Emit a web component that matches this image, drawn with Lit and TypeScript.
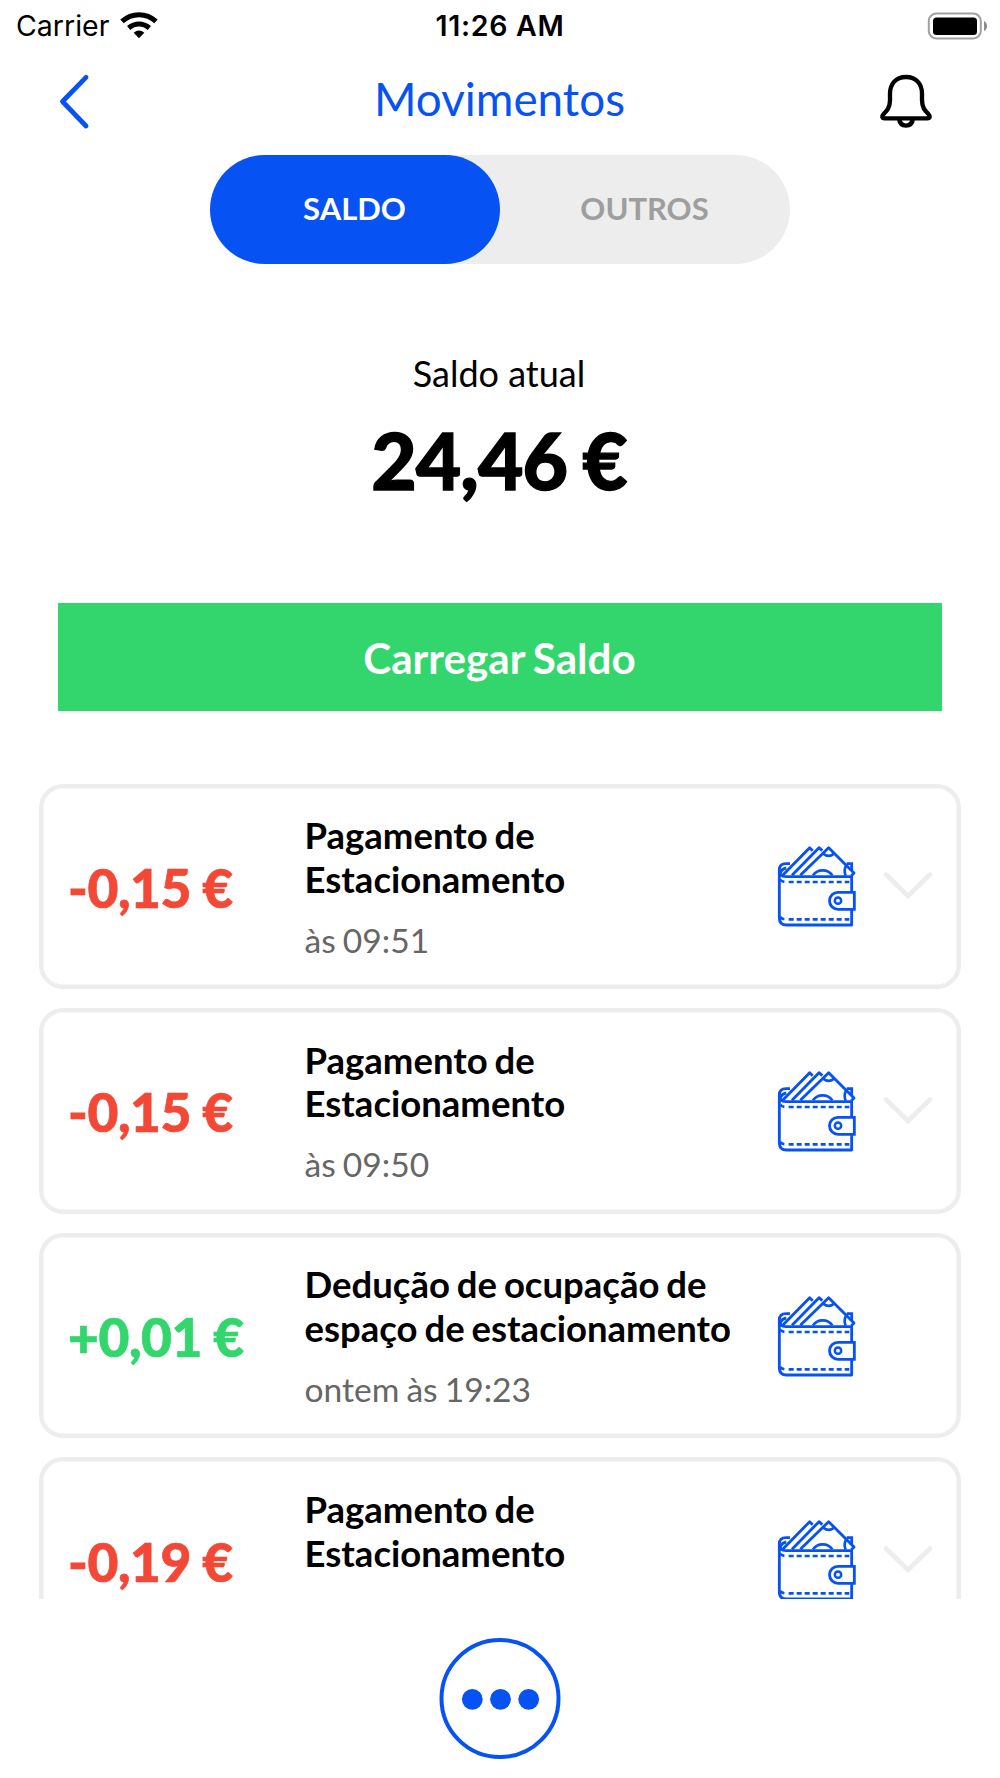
import { LitElement, html, css, svg, nothing } from "lit";
import { customElement, property, state } from "lit/decorators.js";

interface Movement {
  amount: string;
  credit: boolean;
  title: string[];
  when: string;
  expandable: boolean;
}

const MOVEMENTS: Movement[] = [
  { amount: "-0,15 €", credit: false, title: ["Pagamento de", "Estacionamento"], when: "às 09:51", expandable: true },
  { amount: "-0,15 €", credit: false, title: ["Pagamento de", "Estacionamento"], when: "às 09:50", expandable: true },
  { amount: "+0,01 €", credit: true, title: ["Dedução de ocupação de", "espaço de estacionamento"], when: "ontem às 19:23", expandable: false },
  { amount: "-0,19 €", credit: false, title: ["Pagamento de", "Estacionamento"], when: "", expandable: true },
];

const walletShapes = svg`
  <g fill="none" stroke="#0652f3" stroke-width="8.5" stroke-linejoin="round">
    <path d="M46 118V264Q46 285 68 285H263V240M263 186V140H66Q46 140 46 120Q46 101 66 101H78" />
    <path d="M49 129Q54 116 67 114" />
    <path d="M56 136L137 53L146 62M84 136L165 53L175 62M109 136L194 53L270 129L262 137" />
    <path d="M178 71Q194 84 210 71" stroke-width="8" />
    <path d="M147 136Q157 121 176 121Q195 121 205 136" stroke-width="8" />
    <path d="M247 106Q238 120 245 137" stroke-width="8" />
    <path d="M248 101H263V122" stroke-linejoin="miter" />
    <path d="M271 187H222A25.500 25.500 0 0 0 222 238H271Z" stroke-linejoin="miter" />
    <circle cx="222" cy="212" r="9.500" stroke-width="7.500" />
    <path d="M48 149Q55 156 65 156M74 156H256" stroke-dasharray="15 9" stroke-width="8" />
    <path d="M48 261Q55 268 65 268M74 268H256" stroke-dasharray="15 9" stroke-width="8" />
  </g>`;

@customElement("movement-card")
export class MovementCard extends LitElement {
  @property({ attribute: false }) movement!: Movement;

  static styles = css`
    :host { display: block; flex: none; }
    .card {
      box-sizing: border-box;
      height: 205.300px;
      border: 4px solid #ededed;
      box-shadow: inset 0 0 0 0.500px #ededed;
      border-radius: 24px;
      display: grid;
      grid-template-columns: 236.500px 459.500px 117.500px 1fr;
      align-items: center;
      padding-left: 25px;
      font-family: Lato, sans-serif;
    }
    .amount {
      padding-top: 1px;
      font-size: 53.300px;
      font-weight: 900;
      line-height: 64px;
      letter-spacing: -0.450px;
      word-spacing: -1px;
      color: #f44837;
      -webkit-text-stroke: 0.700px currentColor;
      white-space: nowrap;
    }
    .credit { color: #32d66c; }
    .details { align-self: start; padding-top: 26.500px; white-space: nowrap; }
    .title { font-size: 36.500px; font-weight: 700; line-height: 43.600px; word-spacing: -2px; color: #000; }
    .when { margin-top: 16.500px; font-size: 33.600px; line-height: 44px; word-spacing: -1.500px; color: #666; }
    .icon { margin-bottom: 2px; }
    svg { display: block; }
  `;

  render() {
    const m = this.movement;
    return html`
      <article class="card">
        <div class="amount ${m.credit ? "credit" : ""}">${m.amount}</div>
        <div class="details">
          ${m.title.map((line) => html`<div class="title">${line}</div>`)}
          <div class="when">${m.when}</div>
        </div>
        <svg class="icon" width="110" height="110" viewBox="0 0 330 330">${walletShapes}</svg>
        ${m.expandable
          ? html`<svg class="icon" width="52" height="30" viewBox="0 0 52 30">
              <path d="M4 4.500L26 26L48 4.500" fill="none" stroke="#ededed" stroke-width="4.600" stroke-linecap="round" />
            </svg>`
          : nothing}
      </article>
    `;
  }
}

@customElement("app-root")
export class AppRoot extends LitElement {
  @state() private tab: "saldo" | "outros" = "saldo";

  static styles = css`
    :host {
      display: flex;
      flex-direction: column;
      width: 1000px;
      height: 1778px;
      overflow: hidden;
      background: #fff;
      color: #000;
      font-family: Lato, sans-serif;
    }
    svg { display: block; }
    .status {
      box-sizing: border-box;
      height: 50px;
      display: grid;
      grid-template-columns: 1fr auto 1fr;
      align-items: center;
      padding: 0 13px 0 16px;
      font-family: Inter, sans-serif;
      font-size: 28.500px;
      line-height: 50px;
    }
    .carrier { display: flex; align-items: center; gap: 10.500px; }
    .carrier svg { margin-bottom: 1px; }
    .carrier span, .clock { padding-top: 1px; }
    .clock { font-weight: 600; letter-spacing: 0.700px; margin-right: 3px; }
    .battery { justify-self: end; }
    .header {
      box-sizing: border-box;
      height: 104.500px;
      display: grid;
      grid-template-columns: 1fr auto 1fr;
      align-items: start;
      padding: 23px 58px 0 57px;
    }
    .heading { margin: -1px 0 0; font-size: 45.800px; font-weight: 400; line-height: 54px; color: #0652f3; }
    .bell { justify-self: end; margin-right: 8.500px; }
    .tabs {
      flex: none;
      align-self: center;
      display: flex;
      width: 580px;
      height: 109px;
      border-radius: 55px;
      background: #ededed;
    }
    .tab {
      flex: 1;
      border: 0;
      border-radius: 55px;
      background: none;
      padding: 0 1px 2px 0;
      font: 700 31px/40px Lato, sans-serif;
      color: #9e9e9e;
    }
    .active { background: #0652f3; color: #fff; }
    .balance { height: 339.500px; flex: none; text-align: center; box-sizing: border-box; padding: 87.500px 2px 0 0; }
    .label { font-size: 36px; line-height: 44px; }
    .total {
      margin-top: 14.500px;
      font-size: 78.500px;
      font-weight: 900;
      line-height: 100px;
      letter-spacing: -1px;
      word-spacing: -2.500px;
      -webkit-text-stroke: 1.300px currentColor;
    }
    .topup {
      flex: none;
      margin: 0 58px;
      height: 108px;
      border: 0;
      background: #32d66c;
      color: #fff;
      font: 700 42.200px/50px Lato, sans-serif;
      word-spacing: -2px;
      padding: 1px 1px 0 0;
    }
    .list {
      flex: none;
      margin-top: 72.700px;
      height: 815.300px;
      overflow: hidden;
      display: flex;
      flex-direction: column;
      gap: 19.300px;
      padding: 0 39px;
    }
    .footer { flex: 1; display: flex; justify-content: center; padding-top: 38px; }
  `;

  render() {
    return html`
      <div class="status">
        <div class="carrier">
          <span>Carrier</span>
          <svg width="38" height="28" viewBox="0 0 114 84">
            <g fill="none" stroke="#000" stroke-width="15">
              <path d="M6 31Q28 11 57 11Q86 11 108 31" />
              <path d="M26 51Q40 39 57 39Q74 39 88 51" />
            </g>
            <path d="M41 65Q57 52 73 65L57 82Z" />
          </svg>
        </div>
        <div class="clock">11:26 AM</div>
        <svg class="battery" width="60" height="28" viewBox="0 0 60 28">
          <rect x="1.800" y="1.500" width="52" height="25" rx="7.500" fill="none" stroke="#a0a0a0" stroke-width="2" />
          <rect x="6" y="5.500" width="44" height="17.500" rx="3.500" />
          <path d="M57 9Q60 10.500 60 14Q60 17.500 57 19Z" fill="#8c8c8c" />
        </svg>
      </div>
      <header class="header">
        <svg width="34" height="58" viewBox="0 0 34 58">
          <path d="M29 4.300L5.500 28.500L29 53" fill="none" stroke="#0652f3" stroke-width="4.800" stroke-linecap="round" stroke-linejoin="round" />
        </svg>
        <h1 class="heading">Movimentos</h1>
        <svg class="bell" width="56" height="58" viewBox="0 0 168 174">
          <g fill="none" stroke="#000" stroke-width="13" stroke-linejoin="round">
            <path d="M84 12C52 12 36 34 36 62V82C36 104 27 113 17 123C10 130 12 136 20 136H148C156 136 158 130 151 123C141 113 132 104 132 82V62C132 34 116 12 84 12Z" />
            <path d="M63 137C65 151 73 158 84 158C95 158 103 151 105 137" />
          </g>
        </svg>
      </header>
      <nav class="tabs">
        <button class="tab ${this.tab === "saldo" ? "active" : ""}" @click=${() => (this.tab = "saldo")}>SALDO</button>
        <button class="tab ${this.tab === "outros" ? "active" : ""}" @click=${() => (this.tab = "outros")}>OUTROS</button>
      </nav>
      <section class="balance">
        <div class="label">Saldo atual</div>
        <div class="total">24,46 €</div>
      </section>
      <button class="topup">Carregar Saldo</button>
      <section class="list">
        ${MOVEMENTS.map((m) => html`<movement-card .movement=${m}></movement-card>`)}
      </section>
      <footer class="footer">
        <svg width="124" height="124" viewBox="0 0 124 124">
          <circle cx="62" cy="61.500" r="58.500" fill="none" stroke="#0652f3" stroke-width="4" />
          <g fill="#0652f3">
            <circle cx="34.300" cy="62.300" r="10.400" />
            <circle cx="62.500" cy="62.300" r="10.400" />
            <circle cx="90.700" cy="62.300" r="10.400" />
          </g>
        </svg>
      </footer>
    `;
  }
}
